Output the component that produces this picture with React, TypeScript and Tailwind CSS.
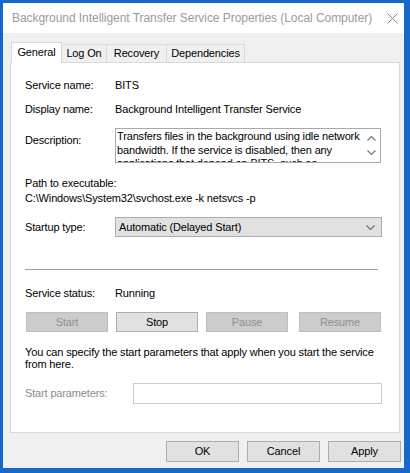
import React from 'react';

const dlg = { fontFamily: '"Liberation Sans", Arial, sans-serif' };

function CloseIcon() {
  return (
    <svg width="11" height="11" viewBox="0 0 11 11" className="block">
      <path d="M0.5 0.5 L10.5 10.5 M10.5 0.5 L0.5 10.5" stroke="#8a8a8a" strokeWidth="1" fill="none" />
    </svg>
  );
}

function Chevron({ up = false, color = '#606060' }: { up?: boolean; color?: string }) {
  return (
    <svg width="9" height="5" viewBox="0 0 9 5" className="block">
      <path
        d={up ? 'M0.5 4.5 L4.5 0.5 L8.5 4.5' : 'M0.5 0.5 L4.5 4.5 L8.5 0.5'}
        stroke={color}
        strokeWidth="1.2"
        fill="none"
      />
    </svg>
  );
}

function Tab({ label, width, active = false }: { label: string; width: string; active?: boolean }) {
  if (active) {
    return (
      <div
        className={`${width} h-[21px] -mb-px relative z-10 flex items-center justify-center bg-white border border-b-0 border-[#d9d9d9] pb-[2px]`}
      >
        {label}
      </div>
    );
  }
  return (
    <div
      className={`${width} h-[18px] flex items-center justify-center bg-[#f0f0f0] border-t border-r border-[#d9d9d9]`}
    >
      {label}
    </div>
  );
}

function Btn({
  label,
  className = '',
  disabled = false,
}: {
  label: string;
  className?: string;
  disabled?: boolean;
}) {
  return (
    <div
      className={`flex items-center justify-center border ${
        disabled ? 'bg-[#cccccc] border-[#bfbfbf] text-[#8f8f8f]' : 'bg-[#e1e1e1] border-[#adadad] text-black'
      } ${className}`}
    >
      {label}
    </div>
  );
}

export default function App() {
  return (
    <div className="w-[410px] h-[473px] bg-[#1666cc] pt-[3px] pl-[3px] overflow-hidden">
      <div
        className="w-[401px] h-[465px] bg-[#f0f0f0] flex flex-col text-[11px] leading-[13px] tracking-[-0.15px] text-black"
        style={dlg}
      >
        {/* title bar */}
        <div className="h-[30px] bg-white flex items-center justify-between pl-[9px] pr-[4px] shrink-0">
          <span className="text-[12px] text-[#9b9b9b] tracking-[-0.05px] pt-[1px] whitespace-nowrap">
            Background Intelligent Transfer Service Properties (Local Computer)
          </span>
          <div className="w-[16px] flex justify-center shrink-0">
            <CloseIcon />
          </div>
        </div>

        {/* tabs */}
        <div className="pl-[8px] pt-[9px] flex items-end">
          <Tab label="General" width="w-[51px]" active />
          <Tab label="Log On" width="w-[45px]" />
          <Tab label="Recovery" width="w-[60px]" />
          <Tab label="Dependencies" width="w-[78px]" />
        </div>

        {/* panel */}
        <div className="ml-[7px] w-[390px] h-[371px] bg-white border border-[#d9d9d9] pl-[14px] flex flex-col">
          <div className="mt-[16px] h-[13px] flex">
            <span className="w-[90px]">Service name:</span>
            <span>BITS</span>
          </div>
          <div className="mt-[11px] h-[13px] flex">
            <span className="w-[90px]">Display name:</span>
            <span>Background Intelligent Transfer Service</span>
          </div>
          <div className="mt-[12px] flex">
            <span className="w-[90px] mt-[6px]">Description:</span>
            <div className="w-[266px] h-[35px] border border-[#a9a9a9] flex overflow-hidden">
              <div className="flex-1 overflow-hidden pl-[1px] pt-[1px] leading-[13.5px]">
                Transfers files in the background using idle network bandwidth. If the service is disabled, then any
                applications that depend on BITS, such as Windows Update, will be unable to download programs.
              </div>
              <div className="w-[17px] flex flex-col items-center pt-[7px] gap-[9px]">
                <Chevron up color="#777777" />
                <Chevron color="#777777" />
              </div>
            </div>
          </div>
          <div className="mt-[14px] h-[13px]">Path to executable:</div>
          <div className="mt-[2px] h-[13px]">C:\Windows\System32\svchost.exe -k netsvcs -p</div>
          <div className="mt-[12px] flex items-center">
            <span className="w-[90px]">Startup type:</span>
            <div className="w-[267px] h-[20px] bg-[#e1e1e1] border border-[#adadad] flex items-center justify-between pl-[3px] pr-[6px]">
              <span>Automatic (Delayed Start)</span>
              <Chevron color="#707070" />
            </div>
          </div>
          <div className="mt-[32px] w-[353px] h-px bg-[#a0a0a0]" />
          <div className="mt-[17px] h-[13px] flex">
            <span className="w-[90px]">Service status:</span>
            <span>Running</span>
          </div>
          <div className="mt-[12px] flex pl-[1px]">
            <Btn label="Start" disabled className="w-[82px] h-[20px]" />
            <Btn label="Stop" className="w-[82px] h-[20px] ml-[8px]" />
            <Btn label="Pause" disabled className="w-[82px] h-[20px] ml-[8px]" />
            <Btn label="Resume" disabled className="w-[82px] h-[20px] ml-[11px]" />
          </div>
          <p className="mt-[14px] leading-[12px] w-[356px]">
            You can specify the start parameters that apply when you start the service from here.
          </p>
          <div className="mt-[13px] flex items-center">
            <span className="w-[108px] text-[#8c8c8c]">Start parameters:</span>
            <div className="w-[249px] h-[21px] border border-[#cccccc] bg-white" />
          </div>
        </div>

        {/* footer */}
        <div className="mt-[8px] flex justify-end pr-[3px] gap-[8px]">
          <Btn label="OK" className="w-[73px] h-[21px]" />
          <Btn label="Cancel" className="w-[73px] h-[21px]" />
          <Btn label="Apply" className="w-[73px] h-[21px]" />
        </div>
      </div>
    </div>
  );
}
